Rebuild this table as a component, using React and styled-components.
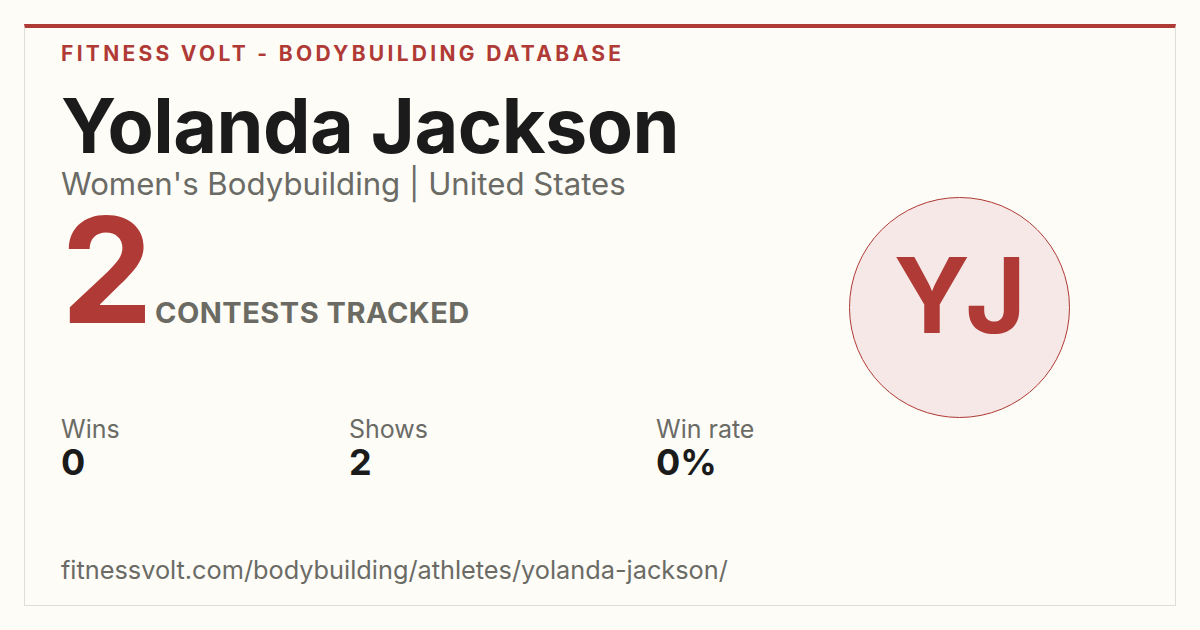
import styled, { createGlobalStyle } from 'styled-components';

const GlobalStyle = createGlobalStyle`
  * { box-sizing: border-box; }
  html, body {
    margin: 0;
    padding: 0;
    width: 1200px;
    height: 630px;
    background: #fdfcf7;
    font-family: Inter, 'Liberation Sans', sans-serif;
    overflow: hidden;
  }
`;

const Page = styled.div`
  width: 1200px;
  height: 630px;
  padding: 24px;
`;

const Card = styled.div`
  height: 582px;
  border: 1px solid #deddd6;
  border-top: 4px solid #b03a35;
  padding: 12px 36px 0 36px;
  display: flex;
`;

const Main = styled.div`
  flex: 1;
  display: flex;
  flex-direction: column;
`;

const Kicker = styled.div`
  font-size: 21px;
  font-weight: 700;
  letter-spacing: 3.3px;
  color: #b03a35;
  line-height: 28px;
`;

const Name = styled.h1`
  margin: 20px 0 0;
  font-size: 75.5px;
  font-weight: 700;
  color: #1b1b1b;
  line-height: 76px;
  letter-spacing: -0.5px;
`;

const Sub = styled.div`
  margin-top: 2px;
  font-size: 31.2px;
  color: #6b6b66;
  line-height: 36px;
`;

const CountRow = styled.div`
  display: flex;
  align-items: baseline;
  gap: 8px;
  margin-top: 13px;
`;

const BigNum = styled.div`
  font-size: 146px;
  font-weight: 700;
  color: #b03a35;
  line-height: 110px;
  letter-spacing: -6px;
`;

const CountLabel = styled.div`
  font-size: 29px;
  font-weight: 700;
  color: #6b6b63;
  letter-spacing: 0.5px;
`;

const Stats = styled.div`
  display: grid;
  grid-template-columns: 288px 307px 1fr;
  margin-top: 84px;
`;

const Stat = styled.div`
  display: flex;
  flex-direction: column;
`;

const StatLabel = styled.div`
  font-size: 25px;
  color: #6b6b66;
  line-height: 30px;
`;

const StatValue = styled.div`
  font-size: 36px;
  font-weight: 700;
  color: #1b1b1b;
  line-height: 36px;
`;

const Url = styled.div`
  margin-top: 75px;
  font-size: 25.3px;
  color: #6b6b66;
  line-height: 30px;
`;

const Side = styled.div`
  display: flex;
  align-items: flex-start;
  padding-top: 157px;
  padding-right: 69px;
`;

const Avatar = styled.div`
  width: 221px;
  height: 221px;
  border-radius: 50%;
  border: 1.5px solid #b03a35;
  background: #f5e8e7;
  display: flex;
  align-items: center;
  justify-content: center;
  padding-bottom: 26px;
  font-size: 104px;
  font-weight: 700;
  color: #b03a35;
  letter-spacing: -1px;
`;

const stats = [
  { label: 'Wins', value: '0' },
  { label: 'Shows', value: '2' },
  { label: 'Win rate', value: '0%' },
];

export default function App() {
  return (
    <>
      <GlobalStyle />
      <Page>
        <Card>
          <Main>
            <Kicker>FITNESS VOLT - BODYBUILDING DATABASE</Kicker>
            <Name>Yolanda Jackson</Name>
            <Sub>Women's Bodybuilding | United States</Sub>
            <CountRow>
              <BigNum>2</BigNum>
              <CountLabel>CONTESTS TRACKED</CountLabel>
            </CountRow>
            <Stats>
              {stats.map((s) => (
                <Stat key={s.label}>
                  <StatLabel>{s.label}</StatLabel>
                  <StatValue>{s.value}</StatValue>
                </Stat>
              ))}
            </Stats>
            <Url>fitnessvolt.com/bodybuilding/athletes/yolanda-jackson/</Url>
          </Main>
          <Side>
            <Avatar>YJ</Avatar>
          </Side>
        </Card>
      </Page>
    </>
  );
}
